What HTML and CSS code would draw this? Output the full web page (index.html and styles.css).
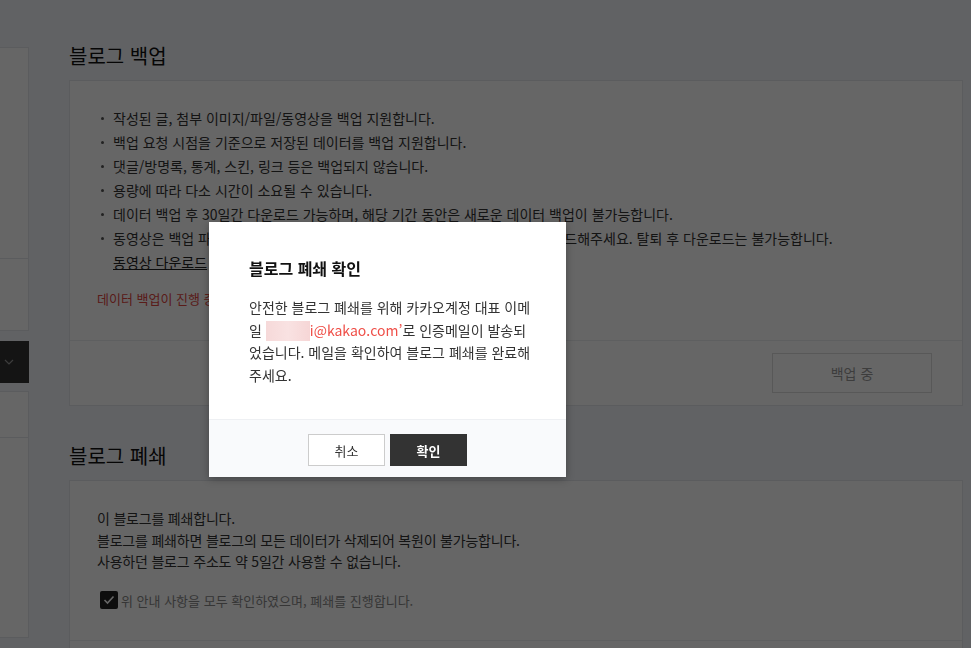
FILE: index.html
```html
<!DOCTYPE html>
<html lang="ko">
<head>
  <meta charset="UTF-8">
  <title>블로그 관리</title>
  <link rel="stylesheet" href="styles.css">
</head>
<body>

  <div class="wrap">
    <div class="side">
      <div class="side-box big"></div>
      <div class="side-box mid"></div>
      <div class="side-toggle">
        <svg width="10" height="6" viewBox="0 0 10 6"><path d="M1 1l4 4 4-4" fill="none" stroke="#999" stroke-width="1.2"/></svg>
      </div>
      <div class="side-box small"></div>
      <div class="side-box tall"></div>
    </div>

    <div class="main">
      <h2 class="sec-title">블로그 백업</h2>
      <div class="card">
        <div class="card-body">
          <ul class="notice">
            <li>작성된 글, 첨부 이미지/파일/동영상을 백업 지원합니다.</li>
            <li>백업 요청 시점을 기준으로 저장된 데이터를 백업 지원합니다.</li>
            <li>댓글/방명록, 통계, 스킨, 링크 등은 백업되지 않습니다.</li>
            <li>용량에 따라 다소 시간이 소요될 수 있습니다.</li>
            <li>데이터 백업 후 30일간 다운로드 가능하며, 해당 기간 동안은 새로운 데이터 백업이 불가능합니다.</li>
            <li>동영상은 백업 파일에 포함되지 않으므로 아래의 링크를 통해 별도로 꼭 다운로드해주세요. 탈퇴 후 다운로드는 불가능합니다.<br><a class="link">동영상 다운로드</a></li>
          </ul>
          <p class="state">데이터 백업이 진행 중입니다.</p>
        </div>
        <div class="card-foot">
          <button class="btn-off">백업 중</button>
        </div>
      </div>

      <h2 class="sec-title">블로그 폐쇄</h2>
      <div class="card">
        <div class="card-body close">
          <p class="desc">이 블로그를 폐쇄합니다.<br>블로그를 폐쇄하면 블로그의 모든 데이터가 삭제되어 복원이 불가능합니다.<br>사용하던 블로그 주소도 약 5일간 사용할 수 없습니다.</p>
          <label class="agree">
            <span class="chk">
              <svg width="12" height="10" viewBox="0 0 12 10"><path d="M1.5 5l3 3 6-6.5" fill="none" stroke="#fff" stroke-width="1.6"/></svg>
            </span>
            위 안내 사항을 모두 확인하였으며, 폐쇄를 진행합니다.
          </label>
        </div>
        <div class="card-foot"></div>
      </div>
    </div>
  </div>

  <div class="dim"></div>

  <div class="layer">
    <div class="layer-body">
      <h3>블로그 폐쇄 확인</h3>
      <p>안전한 블로그 폐쇄를 위해 카카오계정 대표 이메<br>일 <span class="mask"></span><span class="mail">i@kakao.com’</span>로 인증메일이 발송되<br>었습니다. 메일을 확인하여 블로그 폐쇄를 완료해<br>주세요.</p>
    </div>
    <div class="layer-foot">
      <button class="btn-cancel">취소</button>
      <button class="btn-ok">확인</button>
    </div>
  </div>

</body>
</html>
```

FILE: styles.css
```css
* { box-sizing: border-box; }

html, body {
  height: 100%;
}

body {
  margin: 0;
  font-family: "Noto Sans CJK KR", "Noto Sans", sans-serif;
  background: #f3f5f9;
  color: #222;
  overflow: hidden;
}

.wrap {
  display: flex;
  min-height: 100%;
}

/* left menu (cut off) */
.side {
  width: 29px;
  flex-shrink: 0;
  padding-top: 47px;
  display: flex;
  flex-direction: column;
}

.side-box {
  background: #fff;
  border: 1px solid #e4e6ea;
  border-left: none;
}

.side-box.big { height: 212px; }
.side-box.mid { height: 72px; border-top: none; }
.side-box.small { height: 47px; margin-top: 8px; }
.side-box.tall { height: 200px; border-top: none; }

.side-toggle {
  height: 42px;
  margin-top: 10px;
  background: #333;
  display: flex;
  align-items: center;
  padding-left: 4px;
}

.main {
  flex: 1;
  padding: 42px 8px 0 40px;
}

.sec-title {
  margin: 0 0 10px;
  font-size: 20px;
  line-height: 28px;
  font-weight: normal;
  color: #111;
}

.card {
  background: #fff;
  border: 1px solid #e4e6ea;
  margin-bottom: 36px;
}

.card-body {
  padding: 25px 30px 32px 27px;
}

.notice {
  list-style: none;
  margin: 0;
  padding: 0 0 0 4px;
}

.notice li {
  position: relative;
  padding-left: 12px;
  font-size: 14px;
  line-height: 24px;
  color: #333;
}

.notice li::before {
  content: "";
  position: absolute;
  left: 0;
  top: 11px;
  width: 3px;
  height: 3px;
  border-radius: 50%;
  background: #555;
}

.link {
  color: #222;
  text-decoration: underline;
}

.state {
  margin: 16px 0 0;
  font-size: 13px;
  line-height: 18px;
  color: #e0463f;
}

.card-foot {
  border-top: 1px solid #eceef1;
  padding: 12px 30px;
  display: flex;
  justify-content: flex-end;
  min-height: 64px;
}

.btn-off {
  width: 160px;
  height: 40px;
  background: #fff;
  border: 1px solid #dcdcdc;
  color: #999;
  font-family: inherit;
  font-size: 14px;
}

.card-body.close {
  padding: 27px 30px 30px 27px;
}

.desc {
  margin: 0;
  font-size: 14px;
  line-height: 21.5px;
  letter-spacing: -0.2px;
  color: #333;
}

.agree {
  display: flex;
  align-items: center;
  gap: 3px;
  margin: 18px 0 0 3px;
  font-size: 13px;
  color: #888;
}

.chk {
  width: 18px;
  height: 18px;
  background: #222;
  border-radius: 2px;
  display: flex;
  align-items: center;
  justify-content: center;
}

/* confirm layer */
.dim {
  position: fixed;
  top: 0; left: 0;
  width: 100%; height: 100%;
  background: rgba(0,0,0,0.6);
}

.layer {
  position: absolute;
  left: 209px;
  top: 222px;
  width: 357px;
  background: #fff;
  box-shadow: 0 2px 8px rgba(0,0,0,0.3);
}

.layer-body {
  padding: 35px 40px 33px;
}

.layer-body h3 {
  margin: 0 0 17px;
  font-size: 16px;
  line-height: 22px;
  color: #111;
}

.layer-body p {
  margin: 0;
  font-size: 14px;
  line-height: 22.5px;
  color: #333;
  white-space: nowrap;
}

.mask {
  display: inline-block;
  width: 44px;
  height: 20px;
  vertical-align: -5px;
  background: linear-gradient(to right, #f6d9d9, #f9e2e2, #f6d6d6);
}

.mail {
  color: #ef4f48;
}

.layer-foot {
  border-top: 1px solid #eef0f3;
  background: #f9fafc;
  padding: 14px 0 11px;
  display: flex;
  justify-content: center;
  gap: 5px;
}

.layer-foot button {
  width: 77px;
  height: 32px;
  font-family: inherit;
  font-size: 13px;
  cursor: pointer;
}

.btn-cancel {
  background: #fff;
  border: 1px solid #ccc;
  color: #333;
}

.btn-ok {
  background: #333;
  border: 1px solid #333;
  color: #fff;
  font-weight: bold;
}
```
